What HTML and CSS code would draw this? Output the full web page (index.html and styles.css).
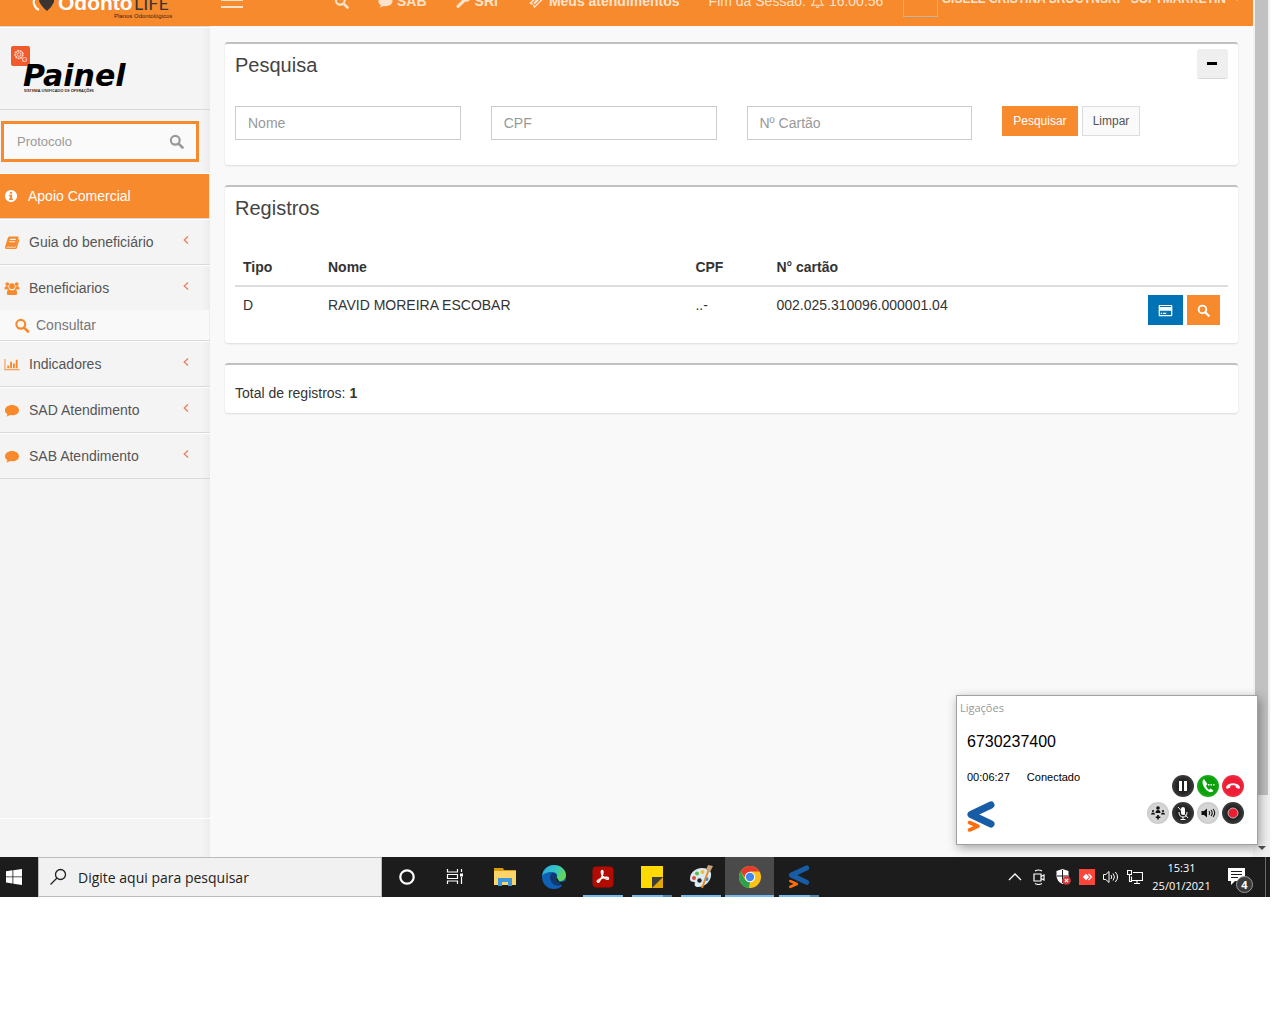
FILE: index.html
```html
<!DOCTYPE html>
<html lang="pt-BR">
<head>
    <meta charset="UTF-8">
    <meta name="viewport" content="width=device-width, initial-scale=1.0">
    <title>Painel - Beneficiários</title>
    <link rel="stylesheet" href="styles.css">
</head>
<body>

    <!-- shared icons -->
    <svg class="sprite" aria-hidden="true">
        <symbol id="i-search" viewBox="0 0 16 16"><circle cx="6.7" cy="6.7" r="4.7" fill="none" stroke="currentColor" stroke-width="2.3"/><path d="M10.2 10.2l4.2 4.2" stroke="currentColor" stroke-width="2.8" stroke-linecap="round"/></symbol>
        <symbol id="i-comment" viewBox="0 0 16 16"><path fill="currentColor" d="M8 2C3.700 2 .5 4.500.5 7.600c0 1.800 1 3.300 2.700 4.300-.2 1-.8 1.800-1.800 2.600 1.900-.1 3.500-.8 4.600-1.600.6.100 1.300.2 2 .2 4.300 0 7.500-2.400 7.500-5.500S12.300 2 8 2z"/></symbol>
        <symbol id="i-wrench" viewBox="0 0 16 16"><path fill="currentColor" d="M15 4.200l-2.600 1.500-2-1.100V2.500L13 1C11 0 8.600.6 7.500 2.500c-.6 1.100-.7 2.300-.3 3.400L1 12.100c-.7.700-.7 1.600 0 2.300s1.700.7 2.400 0l6.300-6.200C12.600 9 15.500 7 15 4.200z"/></symbol>
        <symbol id="i-ticket" viewBox="0 0 16 16"><path fill="currentColor" fill-rule="evenodd" d="M9.500 1l1.600 1.500a1.700 1.700 0 002.400 2.400L15 6.500 6.500 15l-1.600-1.600a1.700 1.700 0 00-2.300-2.300L1 9.500zm-.3 2.500L3.500 9.200l3.300 3.300 5.700-5.700zm0 1.500L11 6.800 6.800 11 5 9.200z"/></symbol>
        <symbol id="i-bell" viewBox="0 0 16 16"><path d="M8 2C5.500 2 4.300 4 4.300 6.500c0 2.700-.8 4.300-2.300 5.500h12c-1.500-1.200-2.300-2.800-2.300-5.500C11.700 4 10.500 2 8 2zM6.500 13.500q1.500 1.800 3 0" fill="none" stroke="currentColor" stroke-width="1.300"/></symbol>
        <symbol id="i-info" viewBox="0 0 16 16"><path fill="currentColor" fill-rule="evenodd" d="M8 1a7 7 0 100 14A7 7 0 008 1zM6.800 3.300h2.400v2H6.800zM5.800 6.600h3.400v4.200h1v1.700H5.800v-1.700h1V8.300h-1z"/></symbol>
        <symbol id="i-book" viewBox="0 0 16 16"><path fill="currentColor" fill-rule="evenodd" d="M5.500 1.500h8.700c.7 0 1 .5.8 1.100l-2.700 8.800c-.2.600-.7 1-1.300 1H2.500c-.6 0-.7.800 0 .8h9.300l2.900-9 .8.600c.3.300.3.600.2 1l-2.500 8c-.2.700-.8 1.200-1.500 1.200H2.200C.9 15 .2 13.600.7 12.200L3.600 3c.3-.9 1-1.500 1.900-1.500zM6 4l-.4 1.200h6.200l.4-1.200zm-.8 2.600l-.4 1.200H11l.4-1.200z"/></symbol>
        <symbol id="i-users" viewBox="0 0 16 16"><g fill="currentColor"><circle cx="3" cy="3.200" r="2"/><circle cx="13" cy="3.200" r="2"/><circle cx="8" cy="5.500" r="3"/><path d="M.2 9V7.300C.2 6 1 5.500 2 5.500l2.200.3c0 1.300.4 2.300 1.200 3.200zM15.800 9V7.300c0-1.300-.8-1.800-1.800-1.800l-2.200.3c0 1.300-.4 2.300-1.200 3.200zM2.500 13c0-2.500.9-4 2.600-4 1.500 1.300 4.300 1.300 5.800 0 1.700 0 2.600 1.500 2.600 4 0 1.300-.8 2-2 2h-7c-1.200 0-2-.7-2-2z"/></g></symbol>
        <symbol id="i-chart" viewBox="0 0 16 16"><path fill="currentColor" d="M0 2h1v11h15v1H0zM3 9h2v3H3zM6 5h2v7H6zM9 7h2v5H9zM12 3h2v9h-2z"/></symbol>
        <symbol id="i-angle" viewBox="0 0 8 10"><path d="M6 1.500L2.200 5 6 8.500" fill="none" stroke="currentColor" stroke-width="1.200"/></symbol>
        <symbol id="i-card" viewBox="0 0 16 16"><path fill="currentColor" fill-rule="evenodd" d="M2 2h12c.8 0 1.300.5 1.300 1.300v9.400c0 .8-.5 1.300-1.300 1.300H2c-.8 0-1.300-.5-1.300-1.300V3.300C.7 2.500 1.200 2 2 2zm0 1.200v1h12v-1zm0 5v4.500h12V8.200zM3 10.500h1.500v1.200H3zm2.500 0h3.300v1.200H5.500z"/></symbol>
        <symbol id="i-softmark" viewBox="0 0 28 32"><path d="M24 4L4 13.500 24 23" fill="none" stroke="#175ca4" stroke-width="7" stroke-linecap="round" stroke-linejoin="round"/><path d="M2.500 21.500L11 25.200 2.500 29" fill="none" stroke="#ff6c0a" stroke-width="3.600" stroke-linecap="round" stroke-linejoin="round"/></symbol>
    </svg>

    <div class="desktop">
        <div class="browser">
            <div class="page">
                <header class="topbar">
                    <a href="#" class="logo" aria-label="Odonto Life">
                        <svg width="210" height="50" viewBox="0 0 210 50">
                            <path d="M41 18q-9 5-7 10 1 4 5 6" fill="none" stroke="#fff" stroke-width="2"/>
                            <path d="M39 20h15v6q-2 5-7 9-6-5-8-10z" fill="#3b3532"/>
                            <text x="58" y="34" class="logo-odonto">Odonto</text>
                            <text x="134" y="34" class="logo-life">LIFE</text>
                            <text x="114" y="42" class="logo-sub">Planos Odontológicos</text>
                        </svg>
                    </a>
                    <button class="menu-toggle" aria-label="Menu"><span></span><span></span><span></span></button>
                    <nav class="topnav">
                        <a href="#" aria-label="Buscar"><svg class="icon"><use href="#i-search"/></svg></a>
                        <a href="#"><svg class="icon"><use href="#i-comment"/></svg> <b>SAB</b></a>
                        <a href="#"><svg class="icon"><use href="#i-wrench"/></svg> <b>SRI</b></a>
                        <a href="#"><svg class="icon icon-wide"><use href="#i-ticket"/></svg> <b>Meus atendimentos</b></a>
                        <span class="session">Fim da Sessão: <svg class="icon"><use href="#i-bell"/></svg> 16:00:56</span>
                    </nav>
                    <a href="#" class="user">
                        <span class="avatar"></span>
                        <span class="user-name">GISELE CRISTINA SROCYNSKI - SOFTMARKETIN</span>
                        <span class="caret"></span>
                    </a>
                </header>

                <div class="wrapper">
                    <aside class="sidebar">
                        <div class="painel-logo">
                            <svg width="150" height="50" viewBox="0 0 150 50" role="img" aria-label="Painel">
                                <rect x="11" y="1" width="19" height="20" rx="2" fill="#f15a2b"/>
                                <circle cx="19" cy="9.500" r="3.800" fill="none" stroke="#ffd3c4" stroke-width="1.800" stroke-dasharray="2 .6"/>
                                <circle cx="19" cy="9.500" r="1.800" fill="none" stroke="#ffd3c4"/>
                                <circle cx="24.500" cy="14.500" r="2" fill="none" stroke="#ffb9a2" stroke-width="1.200"/>
                                <text x="23" y="41" class="painel-name">Painel</text>
                                <text x="24" y="47" class="painel-sub">SISTEMA UNIFICADO DE OPERAÇÕES</text>
                            </svg>
                        </div>
                        <form class="protocol">
                            <input type="text" placeholder="Protocolo" aria-label="Protocolo">
                            <button type="button" aria-label="Buscar protocolo"><svg class="icon"><use href="#i-search"/></svg></button>
                        </form>
                        <ul class="menu">
                            <li class="active"><a href="#"><svg class="icon"><use href="#i-info"/></svg>Apoio Comercial</a></li>
                            <li><a href="#"><svg class="icon"><use href="#i-book"/></svg>Guia do beneficiário<svg class="angle"><use href="#i-angle"/></svg></a></li>
                            <li>
                                <a href="#"><svg class="icon"><use href="#i-users"/></svg>Beneficiarios<svg class="angle"><use href="#i-angle"/></svg></a>
                                <ul class="submenu">
                                    <li><a href="#"><svg class="icon"><use href="#i-search"/></svg>Consultar</a></li>
                                </ul>
                            </li>
                            <li><a href="#"><svg class="icon"><use href="#i-chart"/></svg>Indicadores<svg class="angle"><use href="#i-angle"/></svg></a></li>
                            <li><a href="#"><svg class="icon"><use href="#i-comment"/></svg>SAD Atendimento<svg class="angle"><use href="#i-angle"/></svg></a></li>
                            <li><a href="#"><svg class="icon"><use href="#i-comment"/></svg>SAB Atendimento<svg class="angle"><use href="#i-angle"/></svg></a></li>
                        </ul>
                        <div class="sidebar-footer"></div>
                    </aside>

                    <main class="content">
                        <section class="box">
                            <div class="box-header">
                                <h3>Pesquisa</h3>
                                <button class="btn-collapse" aria-label="Recolher"><span></span></button>
                            </div>
                            <form class="filters">
                                <input type="text" placeholder="Nome" aria-label="Nome">
                                <input type="text" placeholder="CPF" aria-label="CPF">
                                <input type="text" placeholder="Nº Cartão" aria-label="Nº Cartão">
                                <div class="filter-buttons">
                                    <button type="button" class="btn btn-orange">Pesquisar</button>
                                    <button type="button" class="btn btn-default">Limpar</button>
                                </div>
                            </form>
                        </section>

                        <section class="box">
                            <div class="box-header">
                                <h3>Registros</h3>
                            </div>
                            <table class="records">
                                <colgroup><col class="col-type"><col class="col-name"><col class="col-cpf"><col><col class="col-actions"></colgroup>
                                <thead>
                                    <tr><th>Tipo</th><th>Nome</th><th>CPF</th><th>N° cartão</th><th></th></tr>
                                </thead>
                                <tbody>
                                    <tr>
                                        <td>D</td>
                                        <td>RAVID MOREIRA ESCOBAR</td>
                                        <td>..-</td>
                                        <td>002.025.310096.000001.04</td>
                                        <td>
                                            <div class="row-actions">
                                                <button class="btn btn-blue" aria-label="Cartão"><svg class="icon"><use href="#i-card"/></svg></button>
                                                <button class="btn btn-orange" aria-label="Consultar"><svg class="icon"><use href="#i-search"/></svg></button>
                                            </div>
                                        </td>
                                    </tr>
                                </tbody>
                            </table>
                        </section>

                        <section class="box box-total">Total de registros: <b>1</b></section>
                    </main>
                </div>
            </div>
            <div class="scrollbar"><div class="thumb"></div><div class="scroll-down"></div></div>
        </div>

        <!-- softphone window floating over the browser -->
        <div class="phone">
            <div class="phone-title">Ligações</div>
            <div class="phone-number">6730237400</div>
            <div class="phone-status"><span>00:06:27</span><span>Conectado</span></div>
            <div class="phone-bottom">
                <svg class="phone-logo"><use href="#i-softmark"/></svg>
                <div class="phone-buttons">
                    <div>
                        <button class="round dark" aria-label="Pausar"><svg viewBox="0 0 22 22"><path d="M7 6h3v10H7zM12 6h3v10h-3z" fill="#fff"/></svg></button>
                        <button class="round green" aria-label="Atender"><svg viewBox="0 0 22 22"><path d="M7 4C4 6 6 11 8.500 14s6 4.500 8 1.800l-2.800-2.300-1.700 1.200c-1.200-.7-2.600-2.700-3-4.200l1.500-1.300z" fill="#fff"/><path d="M11 9h1.500v1.500H11zM13.500 9H15v1.500h-1.500zM16 9h1.500v1.500H16z" fill="#fff"/></svg></button>
                        <button class="round red" aria-label="Desligar"><svg viewBox="0 0 22 22"><path d="M4 12c2-5 12-5 14 0l-.8 2-3.500-1.500v-1.800c-1.500-.6-3.900-.6-5.400 0v1.800L4.800 14z" fill="#fff"/></svg></button>
                    </div>
                    <div>
                        <button class="round light" aria-label="Conferência"><svg viewBox="0 0 22 22"><g fill="#111"><circle cx="11" cy="6" r="1.800"/><circle cx="6" cy="9" r="1.100"/><circle cx="16" cy="9" r="1.100"/><path d="M8.500 11q0-3 2.500-3t2.500 3zM4 12.500q0-2 2-2t2 2zM14 12.500q0-2 2-2t2 2zM10.200 13h1.600v1.500h1.500v1.500h-1.500v1.500h-1.600V16H8.700v-1.500h1.500z"/></g></svg></button>
                        <button class="round dark" aria-label="Mudo"><svg viewBox="0 0 22 22"><rect x="9" y="5" width="4" height="8" rx="2" fill="#fff"/><path d="M7 10q0 5 4 5t4-5M11 15v2.500M8.500 17.500h5M6 5l10 11" fill="none" stroke="#fff"/></svg></button>
                        <button class="round light" aria-label="Volume"><svg viewBox="0 0 22 22"><path d="M4.500 9h2.500l3-2.500v9L7 13H4.500z" fill="#111"/><path d="M12 9q1.500 2 0 4M14 8q2.500 3 0 6M16 7q3.500 4 0 8" fill="none" stroke="#111" stroke-width="1.100"/></svg></button>
                        <button class="round dark" aria-label="Gravar"><svg viewBox="0 0 22 22"><circle cx="11" cy="11" r="5" fill="#ed1c2e" stroke="#b9b9b9"/></svg></button>
                    </div>
                </div>
            </div>
        </div>

        <footer class="taskbar">
            <button class="start" aria-label="Iniciar"><svg width="16" height="16" viewBox="0 0 16 16"><path d="M0 2.200L6.500 1.300v6.200H0zM7.300 1.200L16 0v7.500H7.300zM0 8.300h6.500v6.200L0 13.600zM7.300 8.300H16V16l-8.700-1.200z" fill="#fff"/></svg></button>
            <label class="task-search">
                <svg width="18" height="18" viewBox="0 0 18 18"><circle cx="11.500" cy="6.500" r="5" fill="none" stroke="#222" stroke-width="1.300"/><path d="M8 10l-6.500 6.500" stroke="#222" stroke-width="1.300"/></svg>
                <input type="text" placeholder="Digite aqui para pesquisar" aria-label="Pesquisar">
            </label>
            <div class="apps">
                <button aria-label="Cortana"><svg viewBox="0 0 24 24"><circle cx="12" cy="12" r="6.700" fill="none" stroke="#fff" stroke-width="2.200"/></svg></button>
                <button aria-label="Visão de tarefas"><svg viewBox="0 0 24 24"><path d="M3.500 4v3h10V4M3.500 19v-3h10v3M3.500 9.500h10v4h-10zM17.500 4v3M17.500 12v7" fill="none" stroke="#fff" stroke-width="1.200"/><path d="M16 8.500h3v3h-3z" fill="#fff"/></svg></button>
                <button aria-label="Explorador"><svg viewBox="0 0 24 24"><path d="M1 3h9l1 2h12v15H1z" fill="#d99b10"/><path d="M1 6h22v14H1z" fill="#fbd46a"/><path d="M5 13h14v8h-4v-4H9v4H5z" fill="#3d97dd"/></svg></button>
                <button aria-label="Edge"><svg viewBox="0 0 24 24"><defs><linearGradient id="edge" x1="0" y1="0" x2="1" y2=".4"><stop offset="0" stop-color="#2aa5e2"/><stop offset=".6" stop-color="#35c7c4"/><stop offset="1" stop-color="#63d857"/></linearGradient></defs><circle cx="12" cy="12" r="12" fill="#0f61b6"/><path d="M0 11C1 4 6 0 12 0c7 0 12 5 12 10 0 4-3 6-6 6-4 0-5-2-3-4 1-3-2-5-5-5-5 0-9 2-10 4z" fill="url(#edge)"/><path d="M8 12c0-3 2-4.500 4-4 2 .3 3.500 2 2.500 4-1.500 3 1 5.500 4.500 5 2 0 3-.7 4-1-2 4-6 5.500-9 4.500-3.500-1-6-4.500-6-8.500z" fill="#123a70"/><path d="M14.500 12c-1.500 3 1 5.500 4.500 5 2 0 3.500-.8 4-1.300l1 4-3 3z" fill="#1c1c1c"/></svg></button>
                <button class="running" aria-label="Acrobat"><svg viewBox="0 0 24 24"><rect x="1.500" y="1.500" width="21" height="21" rx="4" fill="#b30b00"/><path d="M6.500 17c-1.500-1 2-3 5-4s6-1 6 .5-3.500.5-5.500-2-2-6-.8-6 1 3.500-.7 7S7.500 18 6.500 17z" fill="none" stroke="#fff" stroke-width="1.500"/></svg></button>
                <button class="running stacked" aria-label="Notas"><svg viewBox="0 0 24 24"><path d="M1 1h22v22H1z" fill="#ffda00"/><path d="M12 12h11v11H12z" fill="#3c3c3c"/><path d="M12 23l11-11v11z" fill="#e0a800"/></svg></button>
                <button class="running" aria-label="Paint"><svg viewBox="0 0 24 24"><path d="M1 14C1 7 7 3 13 3c6 0 10 3 9 8-1 6-6 11-13 11-3 0-4-2-3-4 0-2-5 0-5-4z" fill="#dcebf3"/><circle cx="5" cy="13" r="2" fill="#e24b3b"/><circle cx="8" cy="8.500" r="2" fill="#58b947"/><circle cx="13.500" cy="7" r="2" fill="#f3bd2c"/><circle cx="10.500" cy="15.500" r="2.200" fill="#222"/><circle cx="17.500" cy="14" r="2" fill="#3387d3"/><path d="M20 4l-7 19" stroke="#e58b2b" stroke-width="2"/><path d="M17 5l2-5 5 1-3 6z" fill="#c9a27a"/></svg></button>
                <button class="running current" aria-label="Chrome"><svg viewBox="0 0 24 24"><circle cx="12" cy="12" r="11" fill="#fbc116"/><path d="M2.500 6.500A11 11 0 0121.500 6.500H12L8 14z" fill="#e33b2e"/><path d="M2.500 6.500L7.200 14.700 12 17l-1 6A11 11 0 012.500 6.500z" fill="#2ba14b"/><circle cx="12" cy="12" r="5.200" fill="#fff"/><circle cx="12" cy="12" r="4.200" fill="#4285f4"/></svg></button>
                <button class="running stacked" aria-label="Softphone"><svg><use href="#i-softmark"/></svg></button>
            </div>
            <div class="tray">
                <svg viewBox="0 0 16 16"><path d="M2 11l6-6 6 6" fill="none" stroke="#fff" stroke-width="1.300"/></svg>
                <svg viewBox="0 0 16 16"><path d="M3 5h7v7H3zM10 7.500l3-1.500v5l-3-1.500M4 2q3.500-2 7 0M4 14.500q3.500 2 7 0" fill="none" stroke="#fff" stroke-width="1.200"/></svg>
                <svg viewBox="0 0 16 16"><path d="M7.500 0l6 2v5q0 5-6 8-6-3-6-8V2z" fill="#fff"/><path d="M7.500 1v13M2 7h11" stroke="#1c1c1c"/><circle cx="11.500" cy="11.500" r="4.300" fill="#d9363b"/><path d="M9.800 9.800l3.400 3.400M13.200 9.800l-3.400 3.400" stroke="#fff" stroke-width="1.200"/></svg>
                <svg viewBox="0 0 16 16"><path d="M0 0h16v16H0z" fill="#ff443a"/><path d="M7 4.800L10.200 8 7 11.200 3.800 8z" fill="#fff"/><path d="M9.500 5l3 3-3 3" fill="none" stroke="#fff" stroke-width="1.300"/></svg>
                <svg viewBox="0 0 16 16"><path d="M.5 5.500h2.300L6 2.500v11l-3.200-3H.5zM8 6q1.500 2 0 4M10 4.500q3 3.500 0 7M12.300 3q4.500 5 0 10" fill="none" stroke="#fff"/></svg>
                <svg viewBox="0 0 16 16"><path d="M.5 1.500h4v4h-4zM2.500 5.500v7H5M6 3.500h9.500v8H4.500v-4M10 11.500v3M7 14.500h6" fill="none" stroke="#fff" stroke-width="1.100"/></svg>
            </div>
            <div class="clock"><span>15:31</span><span>25/01/2021</span></div>
            <button class="notifications" aria-label="Notificações">
                <svg width="18" height="18" viewBox="0 0 18 18"><path d="M0 0h17v13H7l-4 4v-4H0z" fill="#fff"/><path d="M3 3.500h11M3 6.500h11M3 9.500h7" stroke="#1c1c1c"/></svg>
                <span class="count">4</span>
            </button>
        </footer>
    </div>

</body>
</html>
```
FILE: styles.css
```css
*,
*::after {
    box-sizing: border-box;
}

body {
    margin: 0;
    background: #fff;
    font-family: "Liberation Sans", Arial, sans-serif;
    font-size: 14px;
    line-height: 20px;
    color: #333;
}

a {
    color: inherit;
    text-decoration: none;
}

button {
    font-family: inherit;
    border: none;
    padding: 0;
    cursor: pointer;
}

input {
    font-family: inherit;
    min-width: 0;
}

ul {
    list-style: none;
    margin: 0;
    padding: 0;
}

svg {
    flex-shrink: 0;
}

.sprite {
    display: none;
}

.icon {
    width: 15px;
    height: 15px;
}

.icon-wide {
    width: 18px;
}

/* Desktop */
.desktop {
    position: relative;
    display: flex;
    flex-direction: column;
    min-height: calc(100vh - 127px);
    margin-right: 10px;
}

.browser {
    flex: 1;
    display: flex;
}

.page {
    flex: 1;
    display: flex;
    flex-direction: column;
    background: #f9f9f9;
}

.scrollbar {
    width: 17px;
    display: flex;
    flex-direction: column;
    align-items: center;
    padding-bottom: 7px;
    background: #f1f1f1;
}

.thumb {
    width: 13px;
    flex: 1;
    margin-bottom: 51px;
    background: #c1c1c1;
}

.scroll-down {
    border: 4px solid transparent;
    border-top-color: #505050;
    border-bottom: none;
}

/* Top bar, scrolled so only its lower half shows */
.topbar {
    height: 26px;
    overflow: hidden;
    display: flex;
    align-items: flex-end;
    background: #f78a2d;
    color: #fde3cc;
}

.logo {
    height: 50px;
}

.logo-odonto {
    font-family: "Liberation Sans", Arial, sans-serif;
    font-size: 21px;
    font-weight: bold;
    fill: #fff;
}

.logo-life {
    font-family: Lato, sans-serif;
    font-size: 18px;
    fill: #3b3532;
}

.logo-sub {
    font-family: "Liberation Sans", Arial, sans-serif;
    font-size: 6px;
    fill: #3b2412;
}

.menu-toggle {
    width: 44px;
    height: 50px;
    padding: 0 11px 18px;
    display: flex;
    flex-direction: column;
    justify-content: flex-end;
    gap: 5px;
    background: none;
}

.menu-toggle span {
    height: 2px;
    background: #fde3cc;
}

.topnav {
    flex: 1;
    height: 50px;
    margin-left: 80px;
    display: flex;
    align-items: center;
    gap: 29px;
}

.topnav a,
.session {
    display: flex;
    align-items: center;
    gap: 4px;
    white-space: nowrap;
}

.user {
    height: 50px;
    padding-right: 13px;
    display: flex;
    align-items: flex-start;
    gap: 4px;
    white-space: nowrap;
}

.avatar {
    width: 35px;
    height: 35px;
    margin-top: 6px;
    border: 1px solid #c1b5a6;
}

.user-name {
    font-size: 12px;
    font-weight: bold;
    margin-top: 13px;
}

.caret {
    margin: 22px 0 0 4px;
    border: 3px solid transparent;
    border-top-color: #fbc491;
    border-bottom: none;
}

.wrapper {
    flex: 1;
    display: flex;
}

/* Sidebar */
.sidebar {
    width: 210px;
    display: flex;
    flex-direction: column;
    background: linear-gradient(to left, #ececec, #f4f4f4 8px);
    border-top: 1px solid #dbdbdb;
}

.painel-logo {
    height: 83px;
    padding-top: 17px;
    border-top: 1px solid #fff;
    border-bottom: 1px solid #d8d8d8;
}

.painel-name {
    font-family: "DejaVu Sans", sans-serif;
    font-size: 30px;
    font-weight: bold;
    font-style: italic;
    fill: #000;
}

.painel-sub {
    font-family: "Open Sans", sans-serif;
    font-size: 4px;
    font-weight: 600;
    fill: #000;
}

.protocol {
    height: 41px;
    margin: 11px 11px 11px 1px;
    display: flex;
    border: 3px solid #f78a2d;
    background: #fafafa;
}

.protocol input {
    flex: 1;
    padding: 0 0 0 13px;
    border: none;
    background: none;
    font-size: 13px;
}

.protocol button {
    width: 40px;
    background: none;
    color: #999;
    line-height: 0;
}

input::placeholder {
    color: #999;
    opacity: 1;
}

.menu > li {
    border-top: 1px solid #fff;
    border-bottom: 1px solid #d8d8d8;
}

.menu > li > a {
    height: 44px;
    padding: 0 20px 0 4px;
    display: flex;
    align-items: center;
    color: #555;
}

.menu .icon {
    width: 16px;
    margin-right: 9px;
    color: #f78a2d;
}

.menu > .active > a {
    margin-right: 1px;
    background: #f78a2d;
    color: #fff;
}

.menu > .active .icon {
    width: 14px;
    height: 14px;
    margin-right: 10px;
    color: #fff;
}

.angle {
    width: 8px;
    height: 10px;
    margin: 0 0 5px auto;
    color: #f0795a;
}

.submenu {
    margin-right: 1px;
    background: #f9f9f9;
}

.submenu a {
    height: 30px;
    padding-left: 14px;
    display: flex;
    align-items: center;
    color: #777;
}

.submenu .icon {
    margin-right: 6px;
}

.sidebar-footer {
    height: 39px;
    margin-top: auto;
    border-top: 1px solid #fff;
}

/* Content */
.content {
    flex: 1;
    padding: 16px 15px;
}

.box {
    margin-bottom: 20px;
    padding: 10px;
    background: #fff;
    border-top: 2px solid #c1c1c1;
    border-radius: 3px;
    box-shadow: 0 1px 2px rgba(0, 0, 0, 0.12);
}

.box-header {
    height: 52px;
    display: flex;
    justify-content: space-between;
    align-items: flex-start;
}

.box-header h3 {
    margin: 0;
    font-size: 20px;
    line-height: 22px;
    font-weight: normal;
    color: #444;
}

.btn-collapse {
    width: 31px;
    height: 30px;
    margin-top: -5px;
    padding-right: 1px;
    display: flex;
    align-items: center;
    justify-content: center;
    background: #efefef;
    border-bottom: 1px solid #d8d8d8;
    border-radius: 3px;
}

.btn-collapse span {
    width: 10px;
    height: 3px;
    background: #000;
}

.filters {
    display: grid;
    grid-template-columns: repeat(4, 1fr);
    gap: 30px;
    padding-bottom: 15px;
}

.filters input {
    height: 34px;
    padding: 0 12px;
    border: 1px solid #ccc;
    font-size: 14px;
}

.filter-buttons,
.row-actions {
    display: flex;
    gap: 4px;
}

.btn {
    height: 30px;
    padding: 0 10px;
    font-size: 12px;
}

.btn-orange {
    background: #f78a2d;
    border: 1px solid #f78a2d;
    color: #fff;
}

.btn-default {
    background: #fafafa;
    border: 1px solid #ddd;
    color: #555;
}

.btn-blue {
    background: #0073b7;
    border: 1px solid #0073b7;
    color: #fff;
}

.row-actions {
    justify-content: flex-end;
}

.row-actions .btn {
    padding: 0 9px;
    line-height: 0;
}

.row-actions .btn-orange .icon {
    width: 13px;
    height: 13px;
}

.records {
    width: 100%;
    table-layout: fixed;
    border-collapse: separate;
    border-spacing: 0;
}

.records th,
.records td {
    padding: 8px;
    text-align: left;
    vertical-align: top;
}

.records th {
    border-bottom: 2px solid #ddd;
}

.col-type {
    width: 85px;
}

.col-name {
    width: 37%;
}

.col-cpf {
    width: 81px;
}

.col-actions {
    width: 100px;
}

.box-total {
    padding-top: 18px;
}

/* Softphone */
.phone {
    position: absolute;
    right: 12px;
    bottom: 52px;
    width: 302px;
    padding: 2px 13px 11px 10px;
    background: #fff;
    border: 1px solid #a0a0a0;
    box-shadow: 2px 3px 10px rgba(0, 0, 0, 0.35);
    color: #000;
}

.phone-title {
    margin-left: -7px;
    font-family: "Open Sans", sans-serif;
    font-size: 11px;
    color: #999;
}

.phone-number {
    margin-top: 14px;
    font-size: 16px;
}

.phone-status {
    margin-top: 15px;
    display: flex;
    gap: 17px;
    font-size: 11px;
}

.phone-bottom {
    margin-top: -12px;
    display: flex;
    justify-content: space-between;
    align-items: flex-end;
}

.phone-logo {
    width: 28px;
    height: 32px;
}

.phone-buttons {
    display: flex;
    flex-direction: column;
    align-items: flex-end;
    gap: 5px;
    padding-bottom: 9px;
}

.phone-buttons div {
    display: flex;
    gap: 3px;
}

.round {
    width: 22px;
    height: 22px;
    border-radius: 50%;
    line-height: 0;
}

.round svg {
    width: 22px;
    height: 22px;
}

.dark {
    background: radial-gradient(#222 40%, #555);
}

.green {
    background: radial-gradient(#0aa00a 50%, #3cbb3c);
}

.red {
    background: radial-gradient(#ee1c34 50%, #f04a5c);
}

.light {
    background: radial-gradient(#d6d6d6 50%, #bbb);
}

/* Taskbar */
.taskbar {
    height: 40px;
    display: flex;
    background: #1c1c1c;
    color: #fff;
    font-family: "Open Sans", sans-serif;
}

.taskbar button {
    background: none;
}

.start {
    width: 38px;
    padding-right: 10px;
    line-height: 0;
}

.task-search {
    width: 344px;
    padding-left: 10px;
    display: flex;
    align-items: center;
    gap: 11px;
    background: #f1f1f1;
    border: 1px solid #bbb;
}

.task-search input {
    flex: 1;
    padding: 0;
    border: none;
    background: none;
    font-size: 14px;
}

.task-search input::placeholder {
    color: #222;
}

.apps {
    flex: 1;
    display: flex;
}

.apps button {
    width: 49px;
    display: flex;
    flex-direction: column;
    align-items: center;
    justify-content: center;
}

.apps svg {
    width: 24px;
    height: 24px;
}

.apps .running {
    padding-top: 8px;
    justify-content: space-between;
}

.running::after {
    content: "";
    width: 40px;
    height: 2px;
    background: #76b9ed;
}

.stacked::after {
    border-right: 9px solid #5286ac;
}

.apps .current {
    background: #4a4a4a;
}

.current::after {
    width: 49px;
}

.tray {
    display: flex;
    align-items: center;
    gap: 8px;
}

.tray svg {
    width: 16px;
    height: 16px;
}

.clock {
    width: 77px;
    display: flex;
    flex-direction: column;
    justify-content: center;
    align-items: center;
    font-size: 11px;
    line-height: 18px;
}

.taskbar .notifications {
    position: relative;
    width: 46px;
    margin-right: 4px;
    padding-right: 11px;
    border-right: 1px solid #6a6a6a;
    color: #fff;
    line-height: 0;
}

.count {
    position: absolute;
    right: 12px;
    bottom: 4px;
    width: 17px;
    height: 17px;
    border: 1px solid #999;
    border-radius: 50%;
    background: #3a3a3a;
    font-size: 11px;
    font-weight: bold;
    line-height: 15px;
}
```
